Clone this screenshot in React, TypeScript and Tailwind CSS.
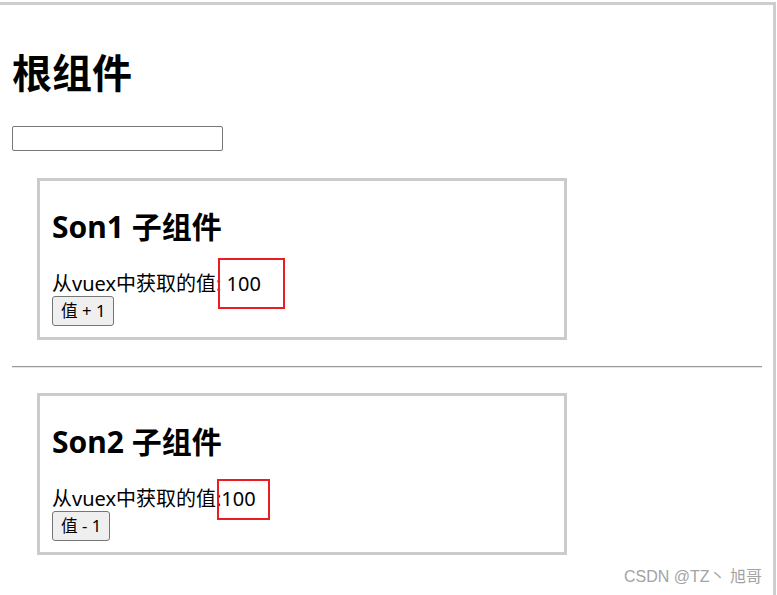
import React from "react"

const font = { fontFamily: '"Noto Sans", "Noto Sans CJK SC", sans-serif' }

function SonBox({
  title,
  text,
  btn,
  mark,
}: {
  title: string
  text: React.ReactNode
  btn: string
  mark: string
}) {
  return (
    <div className="relative ml-[25px] flex w-[530px] flex-col items-start border-[3px] border-[#cbcbcb] px-[12px] pb-[11px]">
      <h2 className="mt-[26px] text-[30px] font-bold leading-[40px] text-black">{title}</h2>
      <p className="mt-[24px] text-[20px] leading-[25px] text-black">{text}</p>
      <button className="h-[30px] rounded-[3px] border border-[#767676] bg-[#efefef] px-[8px] text-[16.7px] leading-[20px] text-black">
        {btn}
      </button>
      <div className={`absolute border-2 border-[#ec1c24] ${mark}`} />
    </div>
  )
}

export default function App() {
  return (
    <div className="relative h-[595px] w-[777px] overflow-hidden bg-white" style={font}>
      <div className="mt-[2px] h-[593px] w-[776px] border-r-[3px] border-t-[3px] border-[#cecece] pl-[12px]">
        <h1 className="mt-[41px] text-[40px] font-bold leading-[53px] text-black">根组件</h1>
        <input className="mt-[27px] block h-[25px] w-[211px] rounded-[2px] border border-[#767676] bg-white" />
        <div className="mt-[27px]">
          <SonBox
            title="Son1 子组件"
            text="从vuex中获取的值: 100"
            btn="值 + 1"
            mark="left-[178px] top-[77px] h-[51px] w-[67px]"
          />
        </div>
        <hr className="mb-[25px] mt-[26px] w-[750px] border-t border-b border-t-[#9a9a9a] border-b-[#e6e6e6]" />
        <SonBox
          title="Son2 子组件"
          text="从vuex中获取的值:100"
          btn="值 - 1"
          mark="left-[177px] top-[83px] h-[41px] w-[53px]"
        />
      </div>
      <div
        className="absolute right-[15px] top-[567px] text-[16px] leading-[20px] text-[#a3a3a3]"
        style={{ fontFamily: '"Liberation Sans", "Noto Sans CJK SC", sans-serif' }}
      >
        CSDN @TZ丶 旭哥
      </div>
    </div>
  )
}
